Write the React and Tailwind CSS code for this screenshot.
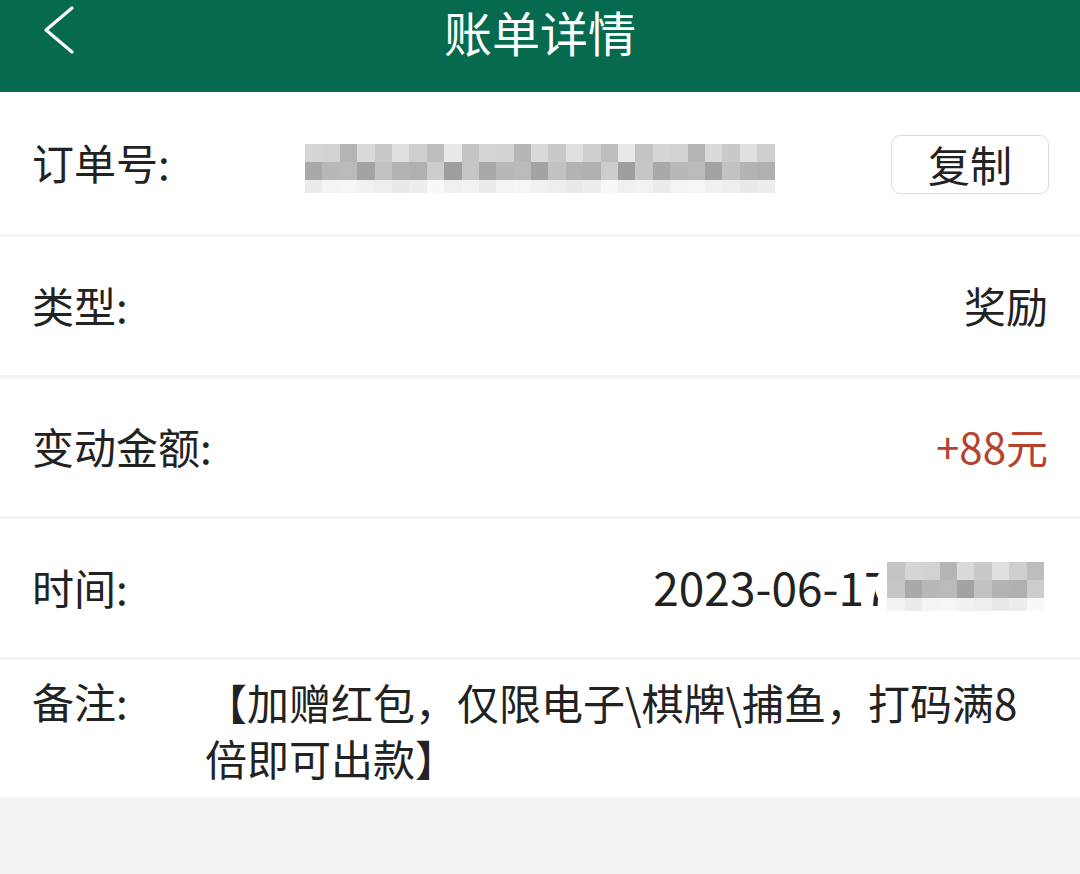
const grays = [
  'bg-[#c9c9c9]', 'bg-[#bdbdbd]', 'bg-[#d6d6d6]', 'bg-[#dadada]', 'bg-[#cfcfcf]',
  'bg-[#c4c4c4]', 'bg-[#b5b5b5]', 'bg-[#e0e0e0]', 'bg-[#e8e8e8]', 'bg-[#d2d2d2]',
]
const mids = [
  'bg-[#b3b3b3]', 'bg-[#9e9e9e]', 'bg-[#b8b8b8]', 'bg-[#c2c2c2]', 'bg-[#cdcdcd]',
  'bg-[#a9a9a9]', 'bg-[#a3a3a3]', 'bg-[#b0b0b0]', 'bg-[#c6c6c6]', 'bg-[#bababa]',
]
const lights = [
  'bg-[#ededed]', 'bg-[#f2f2f2]', 'bg-[#f6f6f6]', 'bg-[#e9e9e9]', 'bg-[#f0f0f0]',
  'bg-[#f4f4f4]', 'bg-[#eeeeee]', 'bg-[#f8f8f8]', 'bg-[#ebebeb]', 'bg-[#f1f1f1]',
]

// 打码块
function Mosaic({ cols, seed = 1 }) {
  const rows = [grays, mids, lights]
  return (
    <div className="flex flex-col">
      {rows.map((pal, r) => (
        <div key={r} className="flex">
          {Array.from({ length: cols }).map((_, c) => (
            <div
              key={c}
              className={`w-[17.4px] ${r === 2 ? 'h-[13px]' : 'h-[18px]'} ${pal[(c * 7 + r * 3 + seed) % pal.length]}`}
            />
          ))}
        </div>
      ))}
    </div>
  )
}

function Row({ label, children }) {
  return (
    <div className="flex items-center justify-between pl-8 pr-8 bg-white border-b-[3px] border-[#f2f2f2] h-[141px]">
      <span className="text-[42px] text-[#222] -mt-[4px]">{label}</span>
      {children}
    </div>
  )
}

export default function App() {
  return (
    <div
      className="min-h-[874px] bg-[#f3f3f3]"
      style={{ fontFamily: '"Noto Sans CJK SC", "Noto Sans", sans-serif' }}
    >
      <header className="h-[92px] bg-[#066a4e] relative flex justify-center">
        <svg className="absolute left-[42px] top-[5px]" width="34" height="50" viewBox="0 0 34 50">
          <path d="M30 3 L4 25 L30 47" fill="none" stroke="white" strokeWidth="3.2" strokeLinecap="round" strokeLinejoin="round" />
        </svg>
        <h1 className="text-[48px] leading-[60px] text-white mt-[1px]">账单详情</h1>
      </header>

      <div className="flex items-center bg-white border-b-[3px] border-[#f2f2f2] h-[145px] pl-8 pr-[31px]">
        <span className="text-[42px] text-[#222] w-[273px] -mt-[4px]">订单号:</span>
        <div className="mt-[10px]">
          <Mosaic cols={27} seed={2} />
        </div>
        <div className="flex-1" />
        <button className="w-[158px] h-[59px] border border-[#dcdcdc] rounded-[9px] text-[42px] text-[#222] leading-none mt-[2px]">
          复制
        </button>
      </div>

      <Row label="类型:">
        <span className="text-[42px] text-[#222] -mt-[4px]">奖励</span>
      </Row>

      <Row label="变动金额:">
        <span className="text-[42px] text-[#b5432f] -mt-[4px]">+88元</span>
      </Row>

      <div className="flex items-center justify-between pl-8 pr-9 bg-white border-b-[3px] border-[#f2f2f2] h-[141px]">
        <span className="text-[42px] text-[#222] -mt-[4px]">时间:</span>
        <div className="flex items-center">
          <span className="text-[46px] text-[#222] -mt-[4px]">2023-06-17</span>
          <div className="ml-[-14px] mt-[-4px] bg-white pl-[12px] rounded-l-full">
            <Mosaic cols={9} seed={5} />
          </div>
        </div>
      </div>

      <div className="flex items-start bg-white h-[137px] pl-8 pr-8 pt-[17px]">
        <span className="text-[42px] text-[#222] leading-[56px] w-[173px] shrink-0 -mt-[4px]">备注:</span>
        <p className="text-[42px] text-[#222] leading-[56px] w-[820px] -mt-[3px]">
          【加赠红包，仅限电子\棋牌\捕鱼，打码满8倍即可出款】
        </p>
      </div>
    </div>
  )
}
